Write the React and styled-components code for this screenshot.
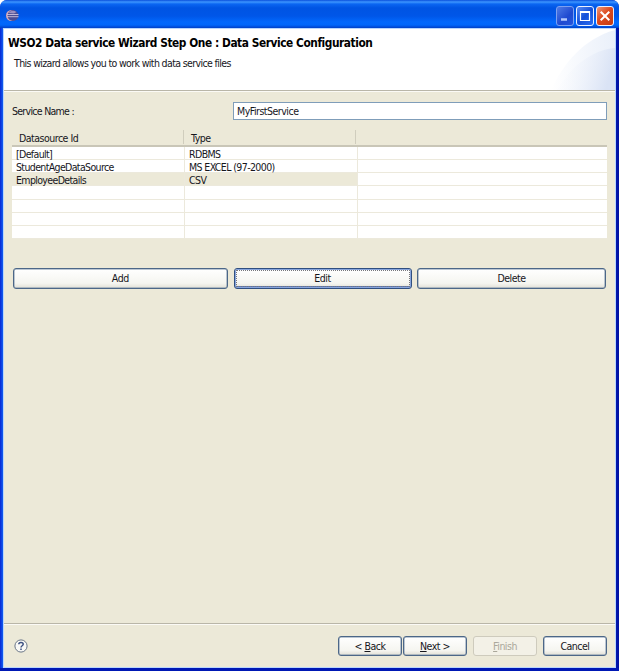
import React from "react";
import styled, { createGlobalStyle, css } from "styled-components";

const GlobalStyle = createGlobalStyle`
  * { box-sizing: border-box; }
  body { margin: 0; background: #fff; }
`;

const Frame = styled.div`
  width: 619px;
  height: 671px;
  display: flex;
  flex-direction: column;
  padding: 0 3px 3px;
  border-radius: 7px 7px 0 0;
  background: linear-gradient(90deg, #0a30d8 0, #0a30d8 1px, #1055ec 2px, #1055ec 3px, #0018b0 616px, #0010a0 619px);
  box-shadow: inset 0 -3px 0 #0018b4;
  overflow: hidden;
  font: 10.5px/13px "DejaVu Sans Condensed", "DejaVu Sans", sans-serif;
  font-stretch: condensed;
  color: #16161c;
`;

const TitleBar = styled.header`
  height: 28px;
  flex: none;
  margin: 0 -3px;
  padding: 3px 5px 0 6px;
  display: flex;
  justify-content: space-between;
  align-items: center;
  background: linear-gradient(180deg, #0a4fdc 0, #3d95ff 2px, #0b66f2 4px, #0054e3 8px, #0056e8 16px, #0268fc 22px, #0066fa 25px, #0040c8 28px);
`;

const Controls = styled.div`
  display: flex;
  gap: 2px;
`;

const CONTROL_FILL = {
  minimize: "linear-gradient(135deg, #4f7ce6, #1e49d0 60%, #2455dc)",
  maximize: "linear-gradient(135deg, #5b8cf4, #1550d8 50%, #2a6cf0)",
  close: "linear-gradient(135deg, #f09878, #dc4a20 45%, #c43a10)",
};

const Control = styled.button`
  width: 18px;
  height: 20px;
  padding: 0;
  display: grid;
  place-items: center;
  border: 1px solid ${(p) => (p.$kind === "minimize" ? "#7c9ff0" : "#eaf0ff")};
  border-radius: 3px;
  background: ${(p) => CONTROL_FILL[p.$kind]};
`;

const Client = styled.main`
  flex: 1;
  display: flex;
  flex-direction: column;
  border: 1px solid #b9d6fb;
  background: #ece9d8;
`;

const Banner = styled.section`
  height: 61px;
  flex: none;
  display: flex;
  justify-content: space-between;
  background: #fff;
`;

const BannerText = styled.div`
  padding: 7px 0 0 4px;
`;

const Heading = styled.h1`
  margin: 0;
  font-size: 11.8px;
  line-height: 14px;
  font-weight: bold;
  color: #000;
  white-space: nowrap;
  letter-spacing: -0.435px;
`;

const Description = styled.p`
  margin: 7px 0 0 6px;
  white-space: nowrap;
  letter-spacing: -0.63px;
`;

const Rule = styled.hr`
  width: 100%;
  height: 2px;
  flex: none;
  margin: 0;
  border: 0;
  border-top: 1px solid #b9b6a8;
  background: #fbfaf5;
`;

const Body = styled.section`
  flex: 1;
  padding: 10px 8px 0 8px;
`;

const Field = styled.label`
  display: grid;
  grid-template-columns: 221px 1fr;
  align-items: center;
  letter-spacing: -0.72px;
`;

const Input = styled.input`
  width: 100%;
  height: 18px;
  padding: 0 4px 0 3px;
  border: 1px solid #7f9db9;
  background: #fff;
  font: inherit;
  letter-spacing: -0.5px;
  color: #16161c;
`;

const Table = styled.div`
  margin-top: 10px;
`;

const HeadRow = styled.div`
  height: 17px;
  display: grid;
  grid-template-columns: 172px 172px 1fr;
  border-bottom: 2px solid #c9c6b7;
`;

const HeadCell = styled.div`
  padding: 2px 0 0 7px;
  margin: 0 0 1px;
  border-right: ${(p) => (p.$last ? "0" : "1px solid #d0cdbd")};
  line-height: 12px;
  letter-spacing: -0.5px;
`;

const Row = styled.div`
  height: 13.14px;
  display: grid;
  grid-template-columns: 173px 173px 1fr;
  grid-template-rows: 100%;
  background: #fff;
`;

const Cell = styled.div`
  padding-left: ${(p) => p.$indent || 4}px;
  border-right: ${(p) => (p.$last ? "0" : "1px solid #ece9dc")};
  border-bottom: 1px solid #ece9dc;
  ${(p) => p.$selected && "background: #ece9d8;"}
  line-height: 14px;
  white-space: nowrap;
  letter-spacing: ${(p) => p.$spacing || "-0.64px"};
`;

const Actions = styled.div`
  display: grid;
  grid-template-columns: 215.5px 178px 189px;
  gap: 5.5px;
  margin-top: 29px;
  padding-left: 0.5px;
`;

const Button = styled.button`
  height: ${(p) => p.$height || 21}px;
  padding: 0;
  border: 1px solid #4c6788;
  border-radius: 3px;
  background: linear-gradient(180deg, #fff, #f5f5f0 75%, #e2e0d6);
  font: inherit;
  letter-spacing: -0.5px;
  color: #16161c;
  box-shadow: inset 0 0 0 0.5px #7b90a8;

  ${(p) =>
    p.$focused &&
    css`
      border-color: #304f80;
      box-shadow: inset 0 0 0 1px #88a5dc, inset 0 -2px 0 #5878bc;
      outline: 1px dotted #77777c;
      outline-offset: -3px;
    `}

  &:disabled {
    border-color: #cecbbd;
    background: #f3f1e7;
    color: #aaa79a;
    box-shadow: none;
  }
`;

const Footer = styled.footer`
  height: 42px;
  flex: none;
  display: flex;
  align-items: center;
  justify-content: space-between;
  padding: 0 8px 0 10px;
`;

const Navigation = styled.nav`
  display: flex;
  gap: 6px;
`;

const StepButtons = styled.div`
  display: flex;
  gap: 1px;
`;

const NavButton = styled(Button).attrs({ $height: 20 })`
  width: 64px;
`;

const Mnemonic = styled.span`
  text-decoration: underline;
  text-underline-offset: 1px;
`;

const SOURCES = [
  ["[Default]", "RDBMS"],
  ["StudentAgeDataSource", "MS EXCEL (97-2000)"],
  ["EmployeeDetails", "CSV", true],
  ["", ""],
  ["", ""],
  ["", ""],
  ["", ""],
];

function EclipseIcon() {
  return (
    <svg width="13" height="13" viewBox="0 0 13 13">
      <circle cx="5.5" cy="6.5" r="5.5" fill="#d6a7b5" />
      <circle cx="7" cy="6.5" r="5.4" fill="#4a4d92" />
      <path d="M2.5 4Q6 0 10.5 3L8 4.5Z" fill="#9a8fc0" />
      <path d="M1 5.5h11.5M1 7.7h11.5" stroke="#cfc2dc" strokeWidth="0.9" />
    </svg>
  );
}

function BannerArt() {
  return (
    <svg width="70" height="61" viewBox="0 0 70 61">
      <defs>
        <linearGradient id="sweep" x1="0" y1="0" x2="1" y2="0">
          <stop offset="0" stopColor="#fff" />
          <stop offset="1" stopColor="#eaf0fa" />
        </linearGradient>
        <linearGradient id="disc" x1="0" y1="0" x2="1" y2="0.2">
          <stop offset="0" stopColor="#fff" stopOpacity="0" />
          <stop offset="1" stopColor="#dae3f5" />
        </linearGradient>
      </defs>
      <path d="M6 61C18 35 38 10 70 1V61Z" fill="url(#sweep)" />
      <path d="M12 61C24 40 45 21 70 19V61Z" fill="url(#disc)" />
    </svg>
  );
}

function HelpIcon() {
  return (
    <svg width="14" height="14" viewBox="0 0 14 14" fill="none">
      <circle cx="7" cy="7" r="6.1" fill="#f8f8f5" stroke="#6a7688" />
      <path d="M4.8 5.3C4.8 2.8 9.2 2.8 9.2 5.2C9.2 6.7 7 6.8 7 8.5M7 9.6v1.5" stroke="#3b4f80" strokeWidth="1.5" />
    </svg>
  );
}

export default function App() {
  return (
    <>
      <GlobalStyle />
      <Frame>
        <TitleBar>
          <EclipseIcon />
          <Controls>
            <Control $kind="minimize" aria-label="Minimize">
              <svg width="14" height="16" viewBox="0 0 14 16"><path d="M3 11.5h6" stroke="#b4c9fb" strokeWidth="2.4" /></svg>
            </Control>
            <Control $kind="maximize" aria-label="Maximize">
              <svg width="14" height="16" viewBox="0 0 14 16" fill="none"><path d="M2.5 3.5h9v9h-9zM2 4.5h10" stroke="#fff" strokeWidth="1.2" /></svg>
            </Control>
            <Control $kind="close" aria-label="Close">
              <svg width="14" height="16" viewBox="0 0 14 16"><path d="M2.7 3.7l8.6 8.6M11.3 3.7l-8.6 8.6" stroke="#fff" strokeWidth="2" /></svg>
            </Control>
          </Controls>
        </TitleBar>
        <Client>
          <Banner>
            <BannerText>
              <Heading>WSO2 Data service Wizard Step One : Data Service Configuration</Heading>
              <Description>This wizard allows you to work with data service files</Description>
            </BannerText>
            <BannerArt />
          </Banner>
          <Rule />
          <Body>
            <Field>
              Service Name :
              <Input defaultValue="MyFirstService" />
            </Field>
            <Table>
              <HeadRow>
                <HeadCell>Datasource Id</HeadCell>
                <HeadCell>Type</HeadCell>
                <HeadCell $last />
              </HeadRow>
              {SOURCES.map(([id, type, selected], i) => (
                <Row key={i}>
                  <Cell $selected={selected}>{id}</Cell>
                  <Cell $selected={selected} $spacing="-0.6px">{type}</Cell>
                  <Cell $last />
                </Row>
              ))}
            </Table>
            <Actions>
              <Button>Add</Button>
              <Button $focused>Edit</Button>
              <Button>Delete</Button>
            </Actions>
          </Body>
          <Rule />
          <Footer>
            <HelpIcon />
            <Navigation>
              <StepButtons>
                <NavButton>&lt; <Mnemonic>B</Mnemonic>ack</NavButton>
                <NavButton><Mnemonic>N</Mnemonic>ext &gt;</NavButton>
              </StepButtons>
              <NavButton disabled><Mnemonic>F</Mnemonic>inish</NavButton>
              <NavButton>Cancel</NavButton>
            </Navigation>
          </Footer>
        </Client>
      </Frame>
    </>
  );
}
